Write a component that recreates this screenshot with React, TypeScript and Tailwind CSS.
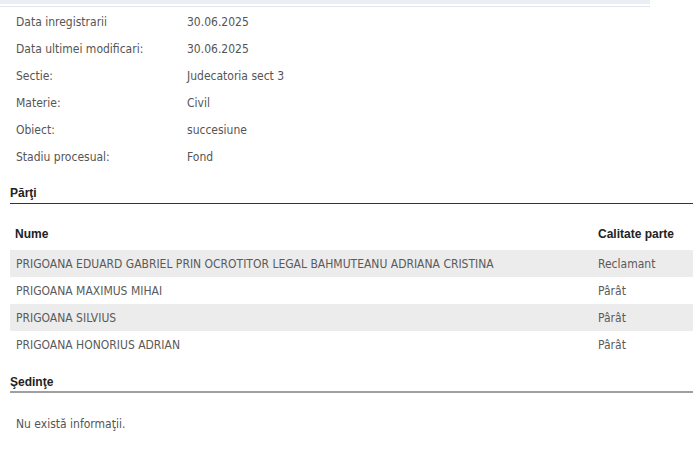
const details = [
  ["Data inregistrarii", "30.06.2025"],
  ["Data ultimei modificari:", "30.06.2025"],
  ["Sectie:", "Judecatoria sect 3"],
  ["Materie:", "Civil"],
  ["Obiect:", "succesiune"],
  ["Stadiu procesual:", "Fond"],
];

const parti = [
  ["PRIGOANA EDUARD GABRIEL PRIN OCROTITOR LEGAL BAHMUTEANU ADRIANA CRISTINA", "Reclamant"],
  ["PRIGOANA MAXIMUS MIHAI", "Pârât"],
  ["PRIGOANA SILVIUS", "Pârât"],
  ["PRIGOANA HONORIUS ADRIAN", "Pârât"],
];

const body = { fontFamily: "Tahoma, 'DejaVu Sans Condensed', 'DejaVu Sans', sans-serif" };
const head = { fontFamily: "'Liberation Sans', Arial, sans-serif" };

export default function App() {
  return (
    <div className="w-[700px] h-[452px] bg-white overflow-hidden text-[12px]" style={body}>
      <div className="w-[650px] h-[4px] bg-[#eceef5]" />
      <div className="w-[650px] h-[1px] mt-[2px] bg-[#e3e5ea]" />

      <div className="pl-4 pt-[1px]">
        {details.map(([label, value]) => (
          <div key={label} className="flex items-center h-[27px] text-[#555]">
            <span className="w-[171px]">{label}</span>
            <span>{value}</span>
          </div>
        ))}
      </div>

      <div className="mx-[10px] w-[683px]">
        <div className="mt-[14px] pb-[1px] border-b border-[#333] font-bold text-[#222]" style={head}>
          Părţi
        </div>

        <div className="flex items-center h-[32px] mt-[14px] font-bold text-[#222]" style={head}>
          <span className="flex-1 pl-[5px]">Nume</span>
          <span className="w-[95px]">Calitate parte</span>
        </div>
        {parti.map(([name, role], i) => (
          <div
            key={name}
            className={`flex items-center h-[27px] text-[#5a5a5a] ${i % 2 === 0 ? "bg-[#ececec]" : "bg-white"}`}
          >
            <span className="flex-1 pl-[6px]">{name}</span>
            <span className="w-[95px]">{role}</span>
          </div>
        ))}

        <div className="mt-[15px] pb-0 border-b-2 border-[#a0a0a0] font-bold text-[#222]" style={head}>
          Şedinţe
        </div>
        <div className="pl-[6px] mt-[22px] text-[#555]">Nu există informaţii.</div>
      </div>
    </div>
  );
}
